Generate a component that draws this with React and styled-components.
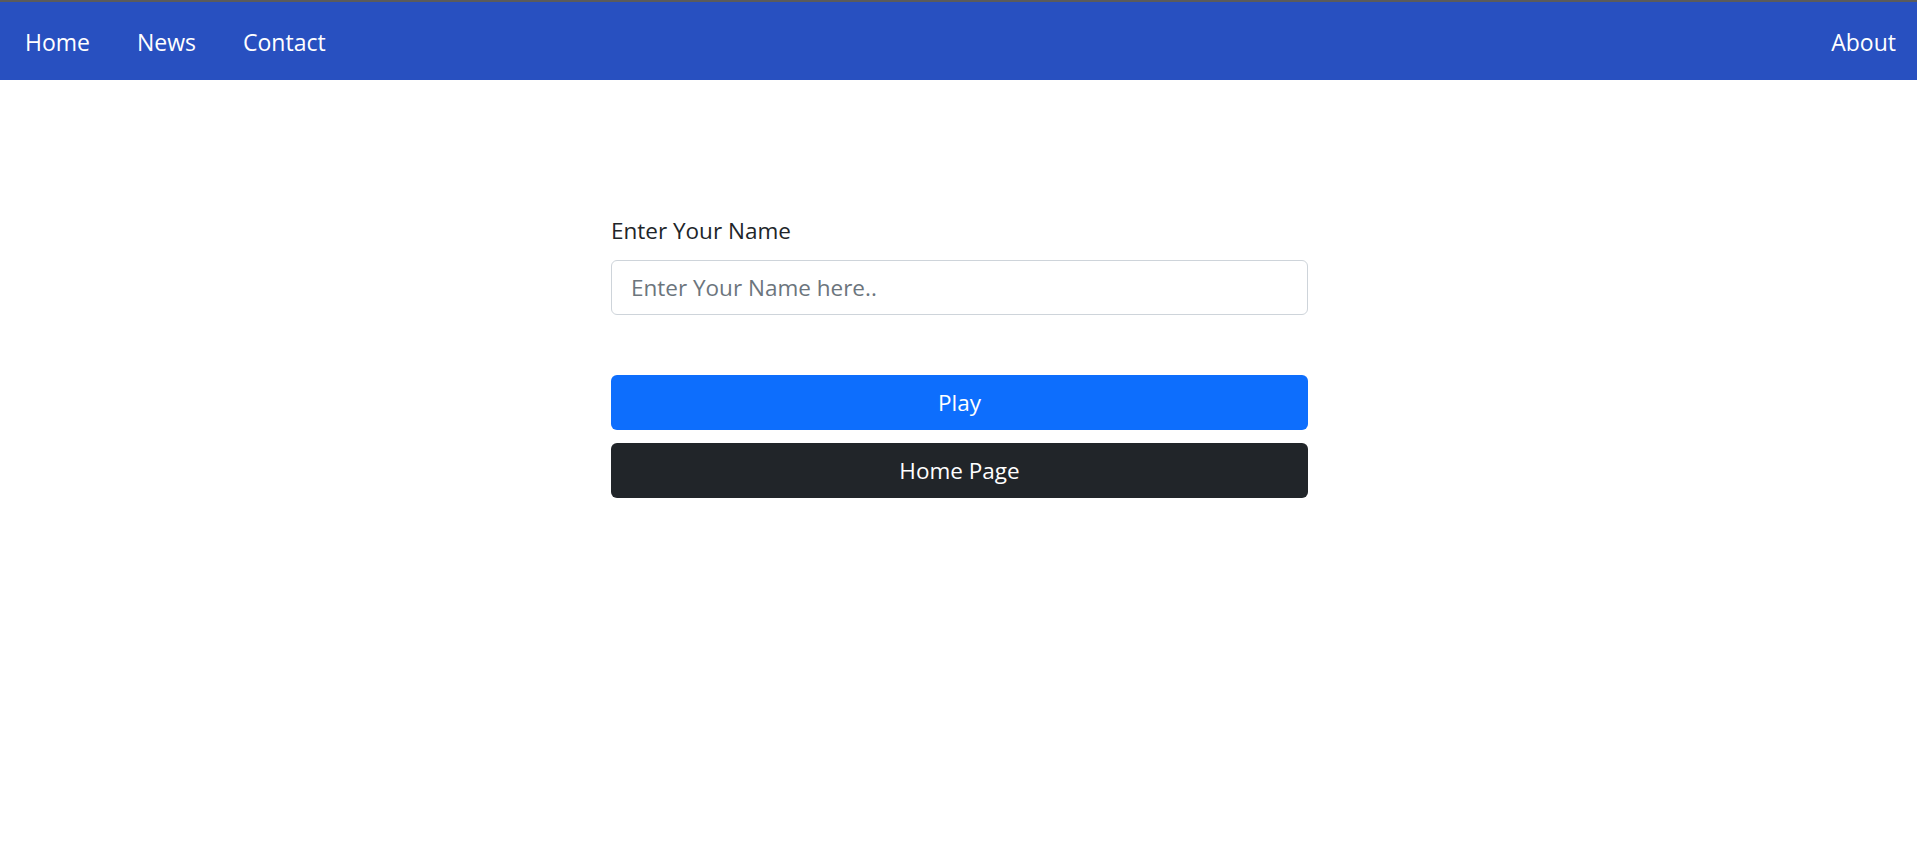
import { styled, createGlobalStyle } from "styled-components";

const GlobalStyle = createGlobalStyle`
  body {
    margin: 0;
    background: #ffffff;
    font-family: "Open Sans", "Noto Sans", sans-serif;
    color: #212529;
  }
`;

const NavBar = styled.nav`
  display: flex;
  align-items: center;
  justify-content: space-between;
  height: 78px;
  box-sizing: border-box;
  height: 80px;
  border-top: 2px solid #5b5b5b;
  background: #2850c0;
  padding: 2px 21px 0 25px;
`;

const NavGroup = styled.div`
  display: flex;
  align-items: center;
  gap: 47px;
`;

const NavLink = styled.a`
  color: #ffffff;
  font-size: 23px;
  text-decoration: none;
  cursor: pointer;
`;

const Main = styled.main`
  width: 697px;
  margin: 0 auto;
  padding: 133px 0 0 2px;
`;

const Label = styled.label`
  display: block;
  font-size: 22.5px;
  line-height: 36px;
  margin-bottom: 11px;
`;

const Input = styled.input`
  display: block;
  box-sizing: border-box;
  width: 100%;
  height: 55px;
  padding: 0 19px;
  border: 1px solid #ced4da;
  border-radius: 6px;
  font-family: inherit;
  font-size: 22.5px;
  color: #212529;

  &::placeholder {
    color: #6c757d;
  }
`;

const ButtonStack = styled.div`
  display: flex;
  flex-direction: column;
  gap: 13px;
  margin-top: 60px;
`;

const Button = styled.button`
  height: 55px;
  width: 100%;
  border: none;
  border-radius: 6px;
  background: ${(p) => (p.$dark ? "#212529" : "#0d6efd")};
  color: #ffffff;
  font-family: inherit;
  font-size: 22.5px;
  cursor: pointer;
`;

export default function App() {
  return (
    <>
      <GlobalStyle />
      <NavBar>
        <NavGroup>
          <NavLink>Home</NavLink>
          <NavLink>News</NavLink>
          <NavLink>Contact</NavLink>
        </NavGroup>
        <NavLink>About</NavLink>
      </NavBar>
      <Main>
        <Label htmlFor="name">Enter Your Name</Label>
        <Input id="name" placeholder="Enter Your Name here.." />
        <ButtonStack>
          <Button>Play</Button>
          <Button $dark>Home Page</Button>
        </ButtonStack>
      </Main>
    </>
  );
}
